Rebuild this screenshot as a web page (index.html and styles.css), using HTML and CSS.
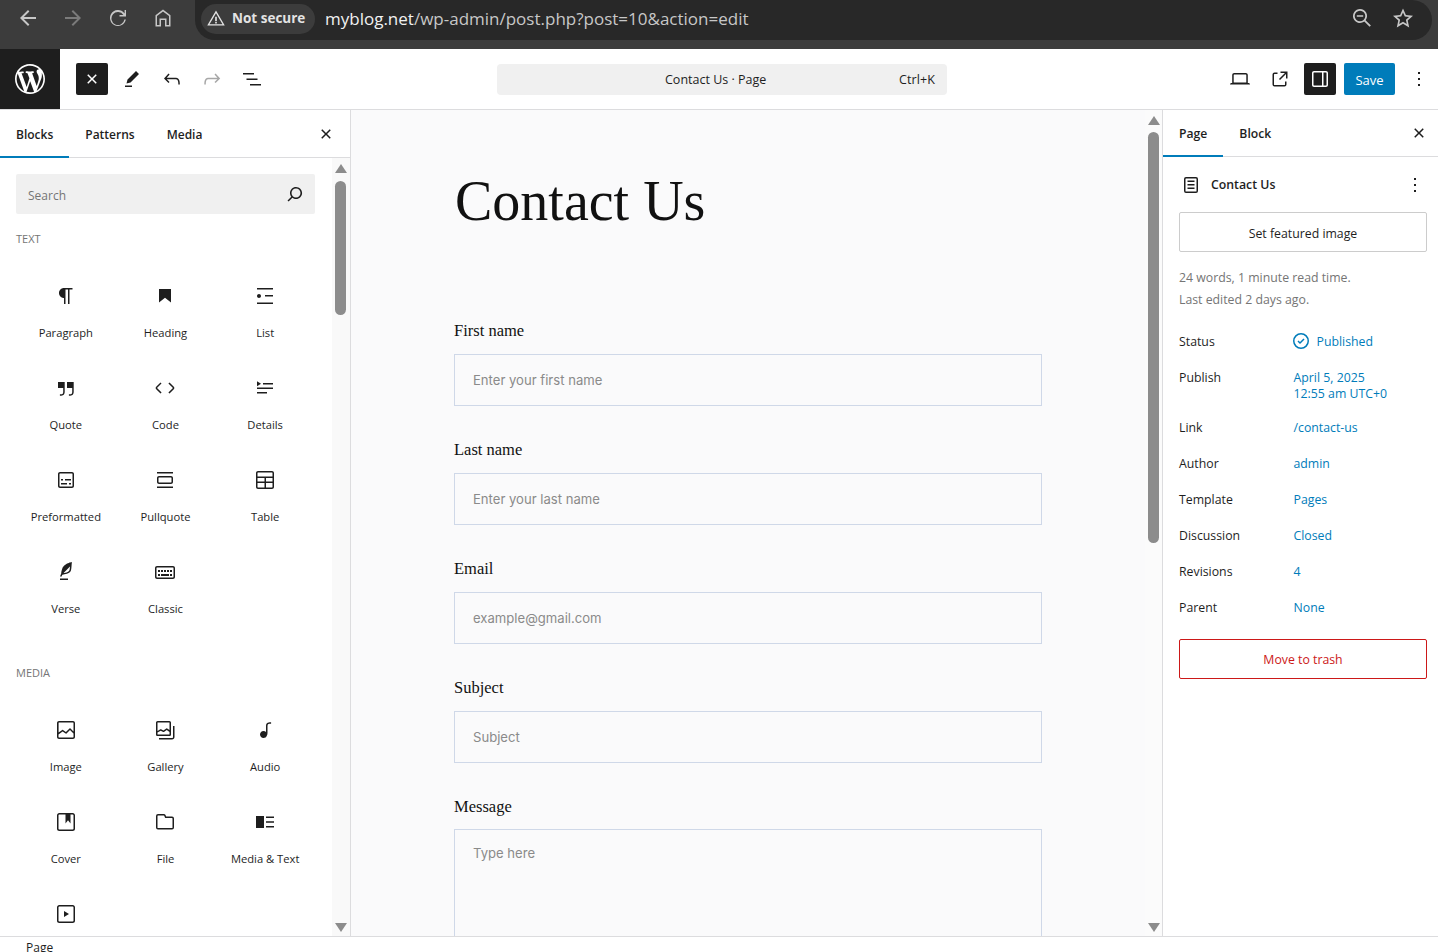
FILE: index.html
```html
<!DOCTYPE html>
<html lang="en">
<head>
<meta charset="utf-8">
<title>Edit Page</title>
<link rel="stylesheet" href="styles.css">
</head>
<body>
<div class="app">
  <header class="browser">
    <div class="nav-icons">
      <svg class="bicon" viewBox="0 0 24 24"><path d="M20 11H7.800l5.600-5.600L12 4l-8 8 8 8 1.400-1.400L7.800 13H20z"/></svg>
      <svg class="bicon dim" viewBox="0 0 24 24"><path d="M4 11h12.200l-5.600-5.600L12 4l8 8-8 8-1.400-1.400 5.600-5.600H4z"/></svg>
      <svg class="bicon" viewBox="0 0 24 24"><path d="M12 20a8 8 0 1 1 6.600-12.500V4H20v6.500h-6.500V9h3.900A6.500 6.500 0 1 0 18.400 13.500h1.500A8 8 0 0 1 12 20z"/></svg>
      <svg class="bicon" viewBox="0 0 24 24"><path d="M12 3.500 4.500 9.300V20.500H10v-6.500h4v6.500h5.500V9.300zM18 19h-2.500v-6.500h-7V19H6V10l6-4.600 6 4.600z"/></svg>
    </div>
    <div class="omnibox">
      <div class="chip">
        <svg class="chip-icon" viewBox="0 0 24 24"><path d="M12 3 1.500 21h21zm0 3.400L19.800 19.500H4.200zM11 10.500v5h2v-5zM11 16.500v2h2v-2z"/></svg>
        <span>Not secure</span>
      </div>
      <div class="url"><span class="host">myblog.net</span><span class="path">/wp-admin/post.php?post=10&amp;action=edit</span></div>
      <div class="omni-right">
        <svg class="bicon" viewBox="0 0 24 24"><path d="M10 3a7 7 0 1 0 4.300 12.500l5.300 5.300 1.300-1.300-5.300-5.300A7 7 0 0 0 10 3zm0 1.700a5.300 5.300 0 1 1 0 10.600 5.300 5.300 0 0 1 0-10.600zM6.800 9.200v1.600h6.400V9.200z"/></svg>
        <svg class="bicon" viewBox="0 0 24 24"><path d="m12 2.500 2.900 6.500 7.100.7-5.300 4.700 1.500 7L12 17.800l-6.200 3.600 1.500-7L2 9.700 9.100 9zm0 4.100-1.800 3.900-4.300.4 3.200 2.900-.9 4.200 3.800-2.200 3.800 2.200-.9-4.200 3.200-2.900-4.300-.4z"/></svg>
      </div>
    </div>
  </header>

  <div class="toolbar">
    <div class="wp-logo">
      <svg viewBox="0 0 20 20"><path d="M20 10c0-5.510-4.490-10-10-10C4.480 0 0 4.490 0 10c0 5.520 4.480 10 10 10 5.510 0 10-4.480 10-10zM7.780 15.370L4.370 6.220c.55-.02 1.170-.08 1.170-.08.5-.06.44-1.130-.06-1.110 0 0-1.450.11-2.370.11-.18 0-.37 0-.58-.01C4.120 2.690 6.870 1.110 10 1.110c2.330 0 4.450.87 6.050 2.340-.68-.11-1.650.39-1.650 1.580 0 .74.45 1.360.9 2.100.35.61.55 1.360.55 2.460 0 1.490-1.400 5-1.400 5l-3.030-8.370c.54-.02.82-.17.82-.17.5-.05.44-1.250-.06-1.220 0 0-1.440.12-2.380.12-.87 0-2.330-.12-2.330-.12-.5-.03-.56 1.200-.06 1.220l.92.08 1.260 3.410zM17.410 10c.24-.64.74-1.870.43-4.250.7 1.290 1.050 2.710 1.050 4.250 0 3.290-1.730 6.240-4.400 7.780.97-2.590 1.940-5.200 2.920-7.780zM6.100 18.090C3.120 16.650 1.110 13.530 1.110 10c0-1.300.23-2.480.72-3.590C3.250 10.300 4.670 14.200 6.100 18.090zm4.030-6.630l2.580 6.980c-.86.29-1.760.45-2.710.45-.79 0-1.570-.11-2.290-.33.81-2.380 1.620-4.740 2.420-7.100z"/></svg>
    </div>
    <div class="tools-left">
      <button class="btn-dark"><svg class="icon" viewBox="0 0 24 24"><path d="M12 13.060l3.712 3.713 1.061-1.060L13.061 12l3.712-3.712-1.060-1.060L12 10.938 8.288 7.227l-1.061 1.060L10.939 12l-3.712 3.712 1.060 1.061L12 13.061z"/></svg></button>
      <button class="btn-icon"><svg class="icon" viewBox="0 0 24 24"><path d="m19 7-3-3-8.500 8.500-1 4 4-1L19 7Zm-7 11.500H5V20h7v-1.500Z"/></svg></button>
      <button class="btn-icon"><svg class="icon" viewBox="0 0 24 24"><path d="M18.300 11.700c-.6-.6-1.400-.9-2.300-.9H6.700l2.900-3.300-1.100-1-4.500 5L8.500 16l1-1-2.700-2.700H16c.5 0 .9.2 1.300.5 1 1 1 3.400 1 4.500v.3h1.500v-.2c0-1.500 0-4.300-1.500-5.700z"/></svg></button>
      <button class="btn-icon off"><svg class="icon" viewBox="0 0 24 24"><path d="M15.600 6.500l-1.100 1 2.900 3.300H8c-.9 0-1.700.3-2.300.9-1.400 1.500-1.400 4.200-1.400 5.600v.2h1.500v-.3c0-1.100 0-3.500 1-4.500.3-.3.7-.5 1.300-.5h9.200L14.500 15l1.100 1.100 4.600-4.600-4.600-5z"/></svg></button>
      <button class="btn-icon"><svg class="icon" viewBox="0 0 24 24"><path d="M3 6h11v1.500H3V6Zm3.500 5.500h11V13h-11v-1.500ZM21 17H10v1.500h11V17Z"/></svg></button>
    </div>
    <div class="docbar"><span class="doc-title">Contact Us · Page</span><span class="doc-key">Ctrl+K</span></div>
    <div class="tools-right">
      <button class="btn-icon"><svg class="icon" viewBox="0 0 24 24"><path d="M20.500 16h-.7V8c0-1.100-.9-2-2-2H6.200c-1.100 0-2 .9-2 2v8h-.7c-.8 0-1.500.7-1.500 1.500h20c0-.8-.7-1.500-1.500-1.500zM5.700 8c0-.3.2-.5.5-.5h11.600c.3 0 .5.2.5.5v7.600H5.700V8z"/></svg></button>
      <button class="btn-icon"><svg class="icon" viewBox="0 0 24 24"><path d="M19.500 4.500h-7V6h4.440l-5.970 5.970 1.060 1.060L18 7.060v4.440h1.500v-7Zm-13 1a2 2 0 0 0-2 2v10a2 2 0 0 0 2 2h10a2 2 0 0 0 2-2v-3H17v3a.5.5 0 0 1-.5.5h-10a.5.5 0 0 1-.5-.5v-10a.5.5 0 0 1 .5-.5h3V5.500h-3Z"/></svg></button>
      <button class="btn-dark side"><svg class="icon" viewBox="0 0 24 24"><path d="M18 4H6c-1.100 0-2 .9-2 2v12c0 1.100.9 2 2 2h12c1.100 0 2-.9 2-2V6c0-1.100-.9-2-2-2zm-4 14.500H6c-.3 0-.5-.2-.5-.5V6c0-.3.2-.5.5-.5h8v13zm4.500-.5c0 .3-.2.5-.5.5h-2.500v-13H18c.3 0 .5.2.5.5v12z"/></svg></button>
      <button class="btn-save">Save</button>
      <button class="btn-icon"><svg class="icon" viewBox="0 0 24 24"><path d="M13 19h-2v-2h2v2zm0-6h-2v-2h2v2zm0-6h-2V5h2v2z"/></svg></button>
    </div>
  </div>

  <main class="workspace">
    <aside class="inserter">
      <div class="tabs ins-tabs">
        <span class="tab active">Blocks</span><span class="tab">Patterns</span><span class="tab">Media</span>
        <svg class="icon tab-close" viewBox="0 0 24 24"><path d="M12 13.060l3.712 3.713 1.061-1.060L13.061 12l3.712-3.712-1.060-1.060L12 10.938 8.288 7.227l-1.061 1.060L10.939 12l-3.712 3.712 1.060 1.061L12 13.061z"/></svg>
      </div>
      <div class="ins-body">
        <div class="ins-scroll">
          <div class="search"><span>Search</span><svg class="icon" viewBox="0 0 24 24"><path d="M13 5c-3.300 0-6 2.700-6 6 0 1.400.5 2.700 1.300 3.700l-3.800 3.800 1.100 1.100 3.800-3.800c1 .8 2.300 1.300 3.700 1.300 3.300 0 6-2.700 6-6S16.300 5 13 5zm0 10.500c-2.500 0-4.500-2-4.500-4.500s2-4.500 4.500-4.500 4.500 2 4.500 4.500-2 4.500-4.500 4.500z"/></svg></div>
          <h2 class="cat">TEXT</h2>
          <div class="blocks">
            <div class="block"><svg class="icon" viewBox="0 0 24 24"><path d="m9.996 14v-.2251l.0039.0001v6.225h1.500v-14.500h2.500v14.500h1.500v-14.500h3v-1.500h-8.504c-2.761 0-5 2.239-5 5 0 2.761 2.239 5 5 5z"/></svg><span>Paragraph</span></div>
            <div class="block"><svg class="icon" viewBox="0 0 24 24"><path d="M6 5V18.591L12 13.847L18 18.591V5H6Z"/></svg><span>Heading</span></div>
            <div class="block"><svg class="icon" viewBox="0 0 24 24"><path d="M4 4v1.500h16V4H4zm8 8.500h8V11h-8v1.500zM4 20h16v-1.500H4V20zm4-8c0-1.100-.9-2-2-2s-2 .9-2 2 .9 2 2 2 2-.9 2-2z"/></svg><span>List</span></div>
            <div class="block"><svg class="icon" viewBox="0 0 24 24"><path d="M13 6v6h5.200v4c0 .8-.2 1.400-.5 1.700-.6.6-1.600.6-2.500.5h-.3v1.500h.5c1 0 2.300-.1 3.300-1 .6-.6 1-1.600 1-2.800V6H13zm-9 6h5.200v4c0 .8-.2 1.400-.5 1.700-.6.6-1.600.6-2.500.5h-.3v1.500h.5c1 0 2.300-.1 3.300-1 .6-.6 1-1.600 1-2.800V6H4v6z"/></svg><span>Quote</span></div>
            <div class="block"><svg class="icon" viewBox="0 0 24 24"><path d="M20.800 10.700l-4.300-4.300-1.100 1.100 4.300 4.300c.1.1.1.3 0 .4l-4.300 4.300 1.100 1.100 4.300-4.300c.7-.8.7-1.900 0-2.600zM4.200 11.800l4.300-4.300-1-1-4.300 4.300c-.7.7-.7 1.800 0 2.500l4.300 4.300 1.100-1.100-4.300-4.300c-.2-.1-.2-.3-.1-.4z"/></svg><span>Code</span></div>
            <div class="block"><svg class="icon" viewBox="0 0 24 24"><path d="M4 16h10v1.500H4V16Zm0-4.500h16V13H4v-1.500ZM10 7h10v1.500H10V7Z"/><path d="m4 5.250 4 2.500-4 2.500v-5Z"/></svg><span>Details</span></div>
            <div class="block"><svg class="icon" viewBox="0 0 24 24"><path d="M18 4H6c-1.100 0-2 .9-2 2v12c0 1.100.9 2 2 2h12c1.100 0 2-.9 2-2V6c0-1.100-.9-2-2-2zm.5 14c0 .3-.2.5-.5.5H6c-.3 0-.5-.2-.5-.5V6c0-.3.2-.5.5-.5h12c.3 0 .5.2.5.5v12zM7 16.500h6V15H7v1.500zm4-4h6V11h-6v1.500zM9 11H7v1.500h2V11zm6 5.500h2V15h-2v1.500z"/></svg><span>Preformatted</span></div>
            <div class="block"><svg class="icon" viewBox="0 0 24 24"><path d="M18 8H6c-1.100 0-2 .9-2 2v4c0 1.100.9 2 2 2h12c1.100 0 2-.9 2-2v-4c0-1.100-.9-2-2-2zm.5 6c0 .3-.2.5-.5.5H6c-.3 0-.5-.2-.5-.5v-4c0-.3.2-.5.5-.5h12c.3 0 .5.2.5.5v4zM4 4v1.500h16V4H4zm0 16h16v-1.500H4V20z"/></svg><span>Pullquote</span></div>
            <div class="block"><svg class="icon" viewBox="0 0 24 24"><path d="M19 3H5c-1.100 0-2 .9-2 2v14c0 1.100.9 2 2 2h14c1.100 0 2-.9 2-2V5c0-1.100-.9-2-2-2zM5 4.500h14c.3 0 .5.2.5.5v3.500h-15V5c0-.3.2-.5.5-.5zm8 5.500h6.500v3.500H13V10zm-1.500 3.500h-7V10h7v3.500zm-7 5.500v-4h7v4.500H5c-.3 0-.5-.2-.5-.5zm14.500.5h-6V15h6.500v4c0 .3-.2.5-.5.5z"/></svg><span>Table</span></div>
            <div class="block"><svg class="icon" viewBox="0 0 24 24"><path d="M17.800 2l-.9.3c-.1 0-3.600 1-5.200 2.100C10 5.500 9.300 6.500 8.900 7.100c-.6.9-1.700 4.700-1.700 6.300l-.9 2.300c-.2.4 0 .8.4 1 .1 0 .2.1.3.1.3 0 .6-.2.7-.5l.6-1.500c.3 0 .7-.1 1.200-.2.7-.1 1.400-.3 2.200-.5.8-.2 1.600-.5 2.400-.8.7-.3 1.400-.7 1.900-1.200s.8-1.200 1-1.900c.2-.7.3-1.600.4-2.400.1-.8.1-1.700.2-2.500 0-.8.1-1.500.2-2.100V2zm-1.900 5.600c-.1.8-.2 1.500-.3 2.100-.2.6-.4 1-.6 1.300-.3.3-.8.6-1.400.9-.7.3-1.400.5-2.200.8-.6.2-1.300.3-1.800.4L15 7.500c.3-.3.6-.7 1-1.100 0 .4 0 .8-.1 1.200zM6 20h8v-1.500H6V20z"/></svg><span>Verse</span></div>
            <div class="block"><svg class="icon" viewBox="0 0 24 24"><path d="M20 6H4c-1.100 0-2 .9-2 2v9c0 1.100.9 2 2 2h16c1.100 0 2-.9 2-2V8c0-1.100-.9-2-2-2zm.5 11c0 .3-.2.5-.5.5H4c-.3 0-.5-.2-.5-.5V8c0-.3.2-.5.5-.5h16c.3 0 .5.2.5.5v9zM10 10H8v2h2v-2zm-5 2h2v-2H5v2zm8-2h-2v2h2v-2zm-5 6h8v-2H8v2zm6-4h2v-2h-2v2zm3 0h2v-2h-2v2zm0 4h2v-2h-2v2zM5 16h2v-2H5v2z"/></svg><span>Classic</span></div>
          </div>
          <h2 class="cat media-cat">MEDIA</h2>
          <div class="blocks">
            <div class="block"><svg class="icon" viewBox="0 0 24 24"><path d="M19 3H5c-1.100 0-2 .9-2 2v14c0 1.100.9 2 2 2h14c1.100 0 2-.9 2-2V5c0-1.100-.9-2-2-2zM5 4.500h14c.3 0 .5.2.5.5v8.400l-3-2.900c-.3-.3-.8-.3-1 0L11.900 14 9 12c-.3-.2-.6-.2-.8 0l-3.600 2.600V5c-.1-.3.1-.5.4-.5zm14 15H5c-.3 0-.5-.2-.5-.5v-2.400l4.100-3 3 1.900c.3.2.7.2.9-.1L16 12l3.500 3.400V19c0 .3-.2.5-.5.5z"/></svg><span>Image</span></div>
            <div class="block"><svg class="icon" viewBox="0 0 24 24"><path fill-rule="evenodd" d="M16.375 4.500H4.625a.125.125 0 0 0-.125.125v8.254l2.859-1.540a.75.75 0 0 1 .68-.016l2.384 1.142 2.890-2.074a.75.75 0 0 1 .874 0l2.313 1.660V4.625a.125.125 0 0 0-.125-.125Zm.125 9.398-2.750-1.975-2.813 2.020a.75.75 0 0 1-.76.067l-2.444-1.170L4.500 14.583v1.792c0 .069.056.125.125.125h11.750a.125.125 0 0 0 .125-.125v-2.477ZM4.625 3C3.728 3 3 3.728 3 4.625v11.750C3 17.273 3.728 18 4.625 18h11.750c.898 0 1.625-.727 1.625-1.625V4.625C18 3.728 17.273 3 16.375 3H4.625ZM20 8v11c0 .69-.31 1-.999 1H6v1.500h13.001c1.520 0 2.499-.982 2.499-2.500V8H20Z"/></svg><span>Gallery</span></div>
            <div class="block"><svg class="icon" viewBox="0 0 24 24"><path d="M17.700 4.300c-1.200 0-2.800 0-3.800 1-.6.6-.9 1.500-.9 2.600V14c-.6-.6-1.500-1-2.500-1C8.600 13 7 14.600 7 16.500S8.600 20 10.500 20c1.500 0 2.800-1 3.300-2.300.5-.8.7-1.800.7-2.700V7.900c0-.7.2-1.200.5-1.600.6-.6 1.800-.6 2.800-.6h.3V4.300h-.4z"/></svg><span>Audio</span></div>
            <div class="block"><svg class="icon" viewBox="0 0 24 24"><path d="M18.700 3H5.300C4 3 3 4 3 5.300v13.400C3 20 4 21 5.300 21h13.400c1.300 0 2.300-1 2.300-2.300V5.300C21 4 20 3 18.700 3zm.8 15.700c0 .4-.4.8-.8.8H5.300c-.4 0-.8-.4-.8-.8V5.300c0-.4.4-.8.8-.8h6.200v8.900l2.500-3.100 2.500 3.100V4.500h2.200c.4 0 .8.4.8.8v13.400z"/></svg><span>Cover</span></div>
            <div class="block"><svg class="icon" viewBox="0 0 24 24"><path fill-rule="evenodd" d="M12.848 8a1 1 0 0 1-.914-.594l-.723-1.630a.5.5 0 0 0-.447-.276H5a.5.5 0 0 0-.5.5v11.500a.5.5 0 0 0 .5.5h14a.5.5 0 0 0 .5-.5v-9A.5.5 0 0 0 19 8h-6.152Zm.612-1.500a.5.5 0 0 1-.462-.31l-.445-1.084A2 2 0 0 0 10.763 4H5a2 2 0 0 0-2 2v11.500a2 2 0 0 0 2 2h14a2 2 0 0 0 2-2v-9a2 2 0 0 0-2-2h-5.540Z"/></svg><span>File</span></div>
            <div class="block"><svg class="icon" viewBox="0 0 24 24"><path d="M3 6h8v12H3V6Zm10 .5h8V8h-8V6.500Zm0 4.750h8v1.500h-8Zm0 4.750h8v1.500h-8Z"/></svg><span>Media &amp; Text</span></div>
            <div class="block"><svg class="icon" viewBox="0 0 24 24"><path d="M18.700 3H5.300C4 3 3 4 3 5.300v13.400C3 20 4 21 5.300 21h13.400c1.300 0 2.300-1 2.300-2.300V5.300C21 4 20 3 18.700 3zm.8 15.700c0 .4-.4.8-.8.8H5.300c-.4 0-.8-.4-.8-.8V5.300c0-.4.4-.8.8-.8h13.400c.4 0 .8.4.8.8v13.400zM10 15l5-3-5-3v6z"/></svg></div>
          </div>
        </div>
        <div class="scrollbar short">
          <i class="arrow up"></i><i class="thumb"></i><i class="spacer"></i><i class="arrow down"></i>
        </div>
      </div>
    </aside>

    <section class="canvas">
      <div class="page">
        <h1 class="page-title">Contact Us</h1>
        <form class="form">
          <label class="field"><span>First name</span><input type="text" placeholder="Enter your first name"></label>
          <label class="field"><span>Last name</span><input type="text" placeholder="Enter your last name"></label>
          <label class="field"><span>Email</span><input type="text" placeholder="example@gmail.com"></label>
          <label class="field"><span>Subject</span><input type="text" placeholder="Subject"></label>
          <label class="field"><span class="tight">Message</span><textarea placeholder="Type here"></textarea></label>
        </form>
      </div>
      <div class="scrollbar tall">
        <i class="arrow up"></i><i class="thumb"></i><i class="spacer"></i><i class="arrow down"></i>
      </div>
    </section>

    <aside class="settings">
      <div class="tabs set-tabs">
        <span class="tab active">Page</span><span class="tab">Block</span>
        <svg class="icon tab-close" viewBox="0 0 24 24"><path d="M12 13.060l3.712 3.713 1.061-1.060L13.061 12l3.712-3.712-1.060-1.060L12 10.938 8.288 7.227l-1.061 1.060L10.939 12l-3.712 3.712 1.060 1.061L12 13.061z"/></svg>
      </div>
      <div class="set-body">
        <div class="doc-head">
          <svg class="icon" viewBox="0 0 24 24"><path d="M15.500 7.500h-7V9h7V7.500Zm-7 3.500h7v1.500h-7V11Zm7 3.500h-7V16h7v-1.500Z"/><path fill-rule="evenodd" d="M17 4H7a2 2 0 0 0-2 2v12a2 2 0 0 0 2 2h10a2 2 0 0 0 2-2V6a2 2 0 0 0-2-2ZM7 5.500h10a.5.5 0 0 1 .5.5v12a.5.5 0 0 1-.5.5H7a.5.5 0 0 1-.5-.5V6a.5.5 0 0 1 .5-.5Z"/></svg>
          <strong>Contact Us</strong>
          <svg class="icon doc-more" viewBox="0 0 24 24"><path d="M13 19h-2v-2h2v2zm0-6h-2v-2h2v2zm0-6h-2V5h2v2z"/></svg>
        </div>
        <button class="btn-outline">Set featured image</button>
        <p class="meta">24 words, 1 minute read time.<br>Last edited 2 days ago.</p>
        <dl class="rows">
          <div class="row"><dt>Status</dt><dd class="status"><svg viewBox="0 0 24 24"><path fill-rule="evenodd" d="M12 18.500a6.500 6.500 0 1 1 0-13 6.500 6.500 0 0 1 0 13ZM4 12a8 8 0 1 1 16 0 8 8 0 0 1-16 0Zm11.530-1.470-1.060-1.060L11 12.940l-1.470-1.470-1.060 1.060L11 15.060l4.530-4.530Z"/></svg>Published</dd></div>
          <div class="row two"><dt>Publish</dt><dd>April 5, 2025<br>12:55 am UTC+0</dd></div>
          <div class="row"><dt>Link</dt><dd>/contact-us</dd></div>
          <div class="row"><dt>Author</dt><dd>admin</dd></div>
          <div class="row"><dt>Template</dt><dd>Pages</dd></div>
          <div class="row"><dt>Discussion</dt><dd>Closed</dd></div>
          <div class="row"><dt>Revisions</dt><dd>4</dd></div>
          <div class="row"><dt>Parent</dt><dd>None</dd></div>
        </dl>
        <button class="btn-danger">Move to trash</button>
      </div>
    </aside>
  </main>

  <footer class="crumbs"><span>Page</span></footer>
</div>
</body>
</html>
```

FILE: styles.css
```css
* { box-sizing: border-box; }
html, body { margin: 0; height: 100%; overflow: hidden; background: #fff; }
body { font-family: "Open Sans", "Noto Sans", sans-serif; font-size: 12px; color: #1e1e1e; }
.app { height: 952px; display: flex; flex-direction: column; overflow: hidden; }
button { font: inherit; border: 0; background: none; padding: 0; color: inherit; }
h1, h2, p, dl, dd { margin: 0; }
.icon { width: 24px; height: 24px; fill: currentColor; display: block; flex: none; }

/* browser */
.browser { height: 49px; flex: none; background: #3c3c3c; display: flex; padding-right: 6px; }
.nav-icons { width: 195px; display: flex; padding: 6px 0 0 16px; gap: 21px; }
.bicon { width: 24px; height: 24px; fill: #c7c7c7; flex: none; }
.bicon.dim { fill: #7b7b7b; }
.omnibox { flex: 1; height: 40px; background: #282828; border-radius: 0 20px 20px 20px; display: flex; align-items: flex-start; padding: 4px 0 0 6px; }
.chip { height: 30px; width: 114px; border-radius: 15px; background: #3c3c3c; display: flex; align-items: center; padding: 0 0 2px 5px; gap: 6px; color: #e3e3e3; font-weight: 700; font-size: 13.500px; white-space: nowrap; }
.chip-icon { width: 20px; height: 20px; fill: #e3e3e3; flex: none; }
.url { margin-left: 10px; font-size: 17px; line-height: 30px; white-space: nowrap; }
.host { color: #f1f1f1; }
.path { color: #c7c7c7; }
.omni-right { margin-left: auto; display: flex; gap: 17px; padding: 2px 17px 0 0; }

/* toolbar */
.toolbar { height: 61px; flex: none; display: flex; align-items: flex-start; border-bottom: 1px solid #dcdcde; background: #fff; }
.wp-logo { width: 60px; height: 60px; background: #1e1e1e; display: flex; align-items: center; justify-content: center; flex: none; }
.wp-logo svg { width: 30px; height: 30px; fill: #fff; }
.tools-left { display: flex; align-items: center; height: 60px; padding-left: 16px; width: 437px; flex: none; }
.btn-dark { width: 32px; height: 32px; background: #1e1e1e; color: #fff; border-radius: 2px; display: flex; align-items: center; justify-content: center; margin-right: 4px; flex: none; }
.btn-icon { width: 40px; height: 32px; display: flex; align-items: center; justify-content: center; flex: none; color: #1e1e1e; }
.btn-icon.off { color: #a7a7a7; }
.docbar { width: 450px; height: 31px; margin-top: 15px; background: #f0f0f0; border-radius: 4px; display: flex; align-items: center; padding-left: 168px; flex: none; font-size: 12.500px; justify-content: space-between; padding-right: 12px; }
.doc-key { letter-spacing: .1px; }
.tools-right { margin-left: auto; display: flex; align-items: center; height: 60px; margin-right: -1px; }
.btn-dark.side { margin: 0 8px 0 4px; }
.btn-save { width: 51px; height: 32px; background: #007cba; color: #fff; border-radius: 2px; margin-right: 4px; font-size: 13px; padding-top: 1px; }

/* workspace */
.workspace { flex: 1; min-height: 0; display: grid; grid-template-columns: 351px 812px 275px; }
.tabs { display: flex; border-bottom: 1px solid #dcdcde; align-items: center; }
.tab { font-weight: 600; height: 100%; display: flex; align-items: center; padding: 0 16px; position: relative; font-size: 12.200px; }
.tab.active::after { content: ""; position: absolute; left: 0; right: 0; bottom: -1px; height: 2px; background: #007cba; }
.tab-close { margin-left: auto; }

/* inserter */
.inserter { border-right: 1px solid #dcdcde; display: flex; flex-direction: column; min-height: 0; }
.ins-tabs { height: 48px; flex: none; padding-right: 12px; }
.ins-tabs .tab { padding-top: 1px; font-size: 12px; }
.ins-body { flex: 1; min-height: 0; display: flex; }
.ins-scroll { flex: 1; overflow: hidden; padding: 16px 17px 0 16px; }
.search { height: 40px; background: #f0f0f0; border-radius: 2px; display: flex; align-items: center; justify-content: space-between; padding: 2px 8px 0 12px; color: #757575; }
.search .icon { margin-top: -2px; color: #1e1e1e; }
.cat { font-size: 11px; font-weight: 400; color: #757575; line-height: 16px; margin: 17px 0 0; height: 16px; }
.media-cat { margin-top: 37px; }
.blocks { display: grid; grid-template-columns: repeat(3, 99.670px); grid-auto-rows: 92px; margin-top: 13px; }
.block { display: flex; flex-direction: column; align-items: center; padding-top: 24px; font-size: 11.200px; }
.block span { margin-top: 17px; line-height: 16px; white-space: nowrap; }

/* scrollbars */
.scrollbar { width: 18px; flex: none; background: #f9f9f9; display: flex; flex-direction: column; align-items: center; padding: 6px 1px 4px 0; }
.arrow { width: 0; height: 0; border-left: 6.500px solid transparent; border-right: 6.500px solid transparent; flex: none; }
.arrow.up { border-bottom: 9px solid #8c8c8c; }
.arrow.down { border-top: 9px solid #8c8c8c; }
.thumb { width: 11px; background: #8c8c8c; border-radius: 6px; margin-top: 7px; flex: none; }
.short .thumb { height: 134px; margin-top: 8px; }
.tall .thumb { height: 411px; }
.tall { background: #fbfbfb; }
.spacer { flex: 1; }

/* canvas */
.canvas { background: #fafafb; display: flex; min-height: 0; overflow: hidden; }
.page { flex: 1; overflow: hidden; padding-left: 103px; }
.page-title { font-family: "Liberation Serif", serif; font-weight: 400; font-size: 56px; line-height: 64px; color: #111; margin: 59px 0 0 1px; }
.form { width: 588px; margin-top: 86px; display: flex; flex-direction: column; gap: 32px; }
.field { display: flex; flex-direction: column; }
.field span { font-family: "Liberation Serif", serif; font-size: 16.500px; line-height: 24px; color: #111; margin-bottom: 11px; }
.field span.tight { margin-bottom: 10px; }
.field input, .field textarea { width: 588px; height: 52px; border: 1px solid #cfd8e8; background: #fafafb; padding: 0 18px; font-family: "Inter", sans-serif; font-size: 13.100px; display: block; border-radius: 0; resize: none; outline: 0; }
.field textarea { height: 150px; padding-top: 15px; }
.field ::placeholder { color: #8a8a8a; opacity: 1; }

/* settings */
.settings { border-left: 1px solid #dcdcde; margin-left: -1px; width: 276px; display: flex; flex-direction: column; min-height: 0; }
.set-tabs { height: 47px; flex: none; padding-right: 7px; }
.set-body { padding: 0 11px 0 16px; font-size: 12.300px; }
.doc-head { height: 55px; display: flex; align-items: center; }
.doc-head strong { font-weight: 600; margin-left: 8px; }
.doc-more { margin-left: auto; }
.btn-outline, .btn-danger { display: block; width: 248px; height: 40px; background: #fff; border: 1px solid #ccc; border-radius: 2px; text-align: center; padding-top: 2px; }
.meta { color: #757575; line-height: 22px; margin-top: 15px; }
.rows { margin-top: 12px; }
.row { display: flex; align-items: center; min-height: 36px; }
.row.two { align-items: flex-start; padding-top: 10px; min-height: 50px; line-height: 16px; }
.row dt { width: 114.500px; flex: none; }
.row.two dt { padding-top: 1px; }
.row.two dd { padding-top: 1px; margin-bottom: -2px; }
.row dd { color: #007cba; }
.status { display: flex; align-items: center; gap: 4px; margin-left: -5px; }
.status svg { width: 24px; height: 24px; fill: #007cba; flex: none; }
.btn-danger { border-color: #cc1818; color: #cc1818; margin-top: 14px; padding-top: 0; }

/* footer */
.crumbs { height: 16px; flex: none; border-top: 1px solid #dcdcde; padding: 2px 0 0 26px; line-height: 18px; overflow: hidden; background: #fff; }
```
